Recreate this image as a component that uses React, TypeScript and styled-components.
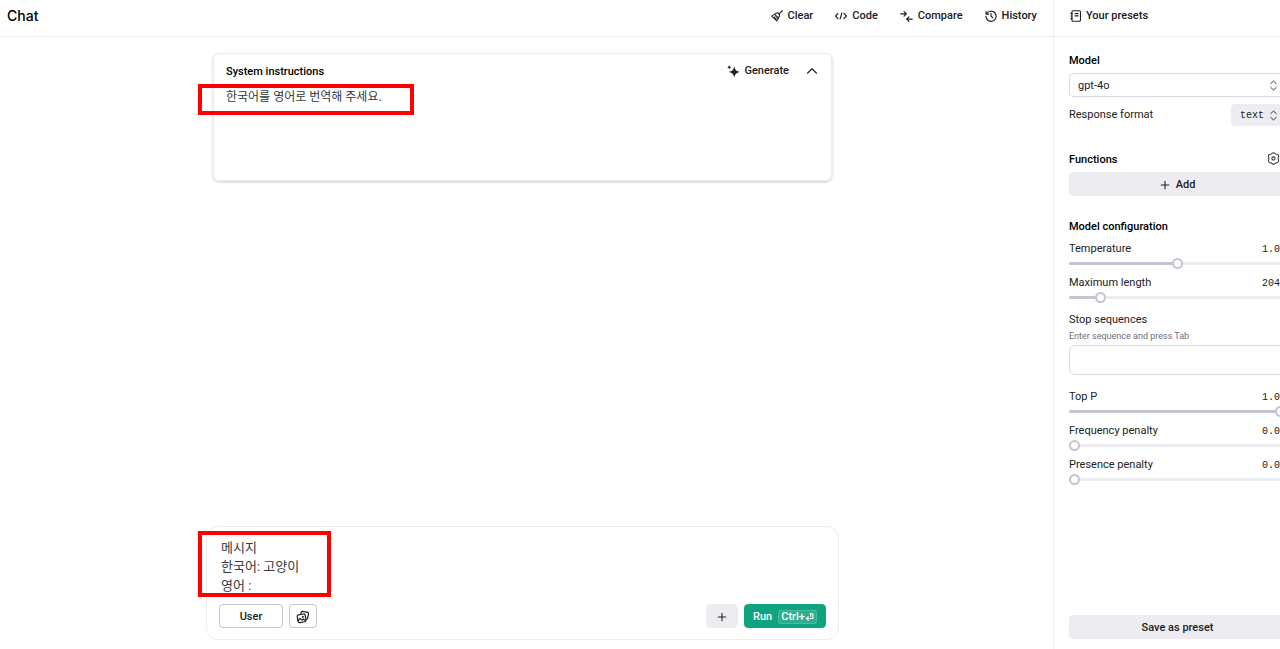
import React, { useState } from "react";
import styled, { createGlobalStyle } from "styled-components";

const GlobalStyle = createGlobalStyle`
  *, *::before, *::after { box-sizing: border-box; }
  body {
    margin: 0;
    overflow: hidden;
    background: #fff;
    color: #202123;
    font-family: Roboto, "Noto Sans CJK KR", sans-serif;
    font-size: 11px;
    line-height: 16px;
  }
  button, input, select, textarea { font: inherit; color: inherit; margin: 0; }
  h1, h2 { margin: 0; font-size: inherit; }
`;

const SIDEBAR_OVERHANG = 22;

const Shell = styled.div`
  display: grid;
  grid-template-columns: minmax(0, 1fr) 249px;
  grid-template-rows: 37px 1fr;
  width: calc(100vw + ${SIDEBAR_OVERHANG}px);
  min-height: 100vh;
`;

const TopBar = styled.header`
  display: flex;
  align-items: center;
  justify-content: space-between;
  padding: 0 16px 4px 7px;
  border-bottom: 1px solid #ececf1;
`;

const PageTitle = styled.h1`
  font-family: Inter, sans-serif;
  font-size: 14px;
  font-weight: 500;
  line-height: 20px;
  color: #000;
`;

const TextButton = styled.button`
  display: inline-flex;
  align-items: center;
  gap: 4px;
  padding: 0;
  border: 0;
  background: none;
  font-weight: 500;
  cursor: pointer;
`;

const Actions = styled.nav`
  display: flex;
  gap: 22px;

  ${TextButton} {
    gap: 5px;
  }
`;

const PresetBar = styled.div`
  display: flex;
  align-items: center;
  padding: 0 16px 4px;
  border-left: 1px solid #ececf1;
  border-bottom: 1px solid #ececf1;
`;

const Workspace = styled.main`
  display: flex;
  flex-direction: column;
  align-items: center;
  justify-content: space-between;
  padding: 16px 8px 9px 0;
`;

const SystemCard = styled.section`
  position: relative;
  width: 100%;
  max-width: 619px;
  padding: 9px 12px 10px;
  border: 1px solid #ececf1;
  border-radius: 6px;
  box-shadow: 0 1px 3px rgba(0, 0, 0, 0.22);
`;

const CardHeader = styled.div`
  display: flex;
  align-items: center;
  height: 16px;
`;

const CardTitle = styled.label`
  flex: 1;
  padding-top: 2px;
  font-weight: 500;
  color: #000;
`;

const CollapseButton = styled(TextButton)`
  margin: 0 1px 0 17px;
`;

const SystemText = styled.textarea`
  display: block;
  width: 100%;
  height: 82px;
  margin-top: 9px;
  padding: 0;
  border: 0;
  outline: 0;
  resize: none;
  background: none;
  font-size: 12px;
  line-height: 18px;
  color: #353740;
`;

const Highlight = styled.div<{ $top: number; $left: number; $width: number; $height: number }>`
  position: absolute;
  top: ${(p) => p.$top}px;
  left: ${(p) => p.$left}px;
  width: ${(p) => p.$width}px;
  height: ${(p) => p.$height}px;
  border: 4px solid #fe0000;
  pointer-events: none;
`;

const Composer = styled.form`
  position: relative;
  width: 100%;
  max-width: 633px;
  padding: 11px 12px;
  border: 1px solid #ececf1;
  border-radius: 12px;
`;

const MessageText = styled.textarea`
  display: block;
  width: 100%;
  height: 57px;
  margin-bottom: 9px;
  padding: 0 2px;
  border: 0;
  outline: 0;
  resize: none;
  overflow: hidden;
  background: none;
  font-size: 13px;
  line-height: 19px;
  color: #353740;
`;

const ComposerBar = styled.div`
  display: flex;
  gap: 6px;
`;

const Spacer = styled.span`
  flex: 1;
`;

const Button = styled.button<{ $tone: "outline" | "soft" | "primary"; $width?: string }>`
  display: flex;
  align-items: center;
  justify-content: center;
  gap: 6px;
  width: ${(p) => p.$width ?? "auto"};
  height: 24px;
  padding: 1px 0 0;
  border: 1px solid ${(p) => ({ outline: "#c5c5d2", soft: "#ececf1", primary: "#10a37f" })[p.$tone]};
  border-radius: 4px;
  background: ${(p) => ({ outline: "#fff", soft: "#ececf1", primary: "#10a37f" })[p.$tone]};
  color: ${(p) => (p.$tone === "primary" ? "#fff" : "#202123")};
  font-weight: 500;
  cursor: pointer;
`;

const Shortcut = styled.kbd`
  display: inline-flex;
  align-items: center;
  height: 14px;
  padding: 0 2px;
  border: 1px solid rgba(255, 255, 255, 0.15);
  border-radius: 3px;
  background: rgba(255, 255, 255, 0.12);
  font-family: inherit;
  font-size: 11px;
`;

const Sidebar = styled.aside`
  display: flex;
  flex-direction: column;
  padding: 16px 16px 10px 15px;
  border-left: 1px solid #ececf1;
`;

const Group = styled.section`
  margin-bottom: 23px;
`;

const ModelGroup = styled(Group)`
  margin-bottom: 26px;
`;

const GroupHeader = styled.div`
  display: flex;
  align-items: flex-start;
  justify-content: space-between;
  height: 16px;
  margin-bottom: 4px;
`;

const GroupTitle = styled.h2`
  font-weight: 500;
  color: #000;
`;

const IconButton = styled(TextButton)`
  margin-right: 6px;
  color: #353740;
`;

const SelectBox = styled.div<{ $soft?: boolean }>`
  position: relative;
  display: flex;
  align-items: center;

  select {
    appearance: none;
    width: ${(p) => (p.$soft ? "55px" : "100%")};
    height: ${(p) => (p.$soft ? 22 : 24)}px;
    padding: 2px 20px 0 8px;
    border: 1px solid ${(p) => (p.$soft ? "#ececf1" : "#d9d9e3")};
    border-radius: 4px;
    background: ${(p) => (p.$soft ? "#ececf1" : "#fff")};
    font-family: ${(p) => (p.$soft ? '"Liberation Mono", monospace' : "inherit")};
    font-size: ${(p) => (p.$soft ? 10 : 11)}px;
  }

  svg {
    position: absolute;
    right: 7px;
    pointer-events: none;
  }
`;

const FieldRow = styled.div`
  display: flex;
  align-items: center;
  justify-content: space-between;
  margin-top: 7px;
`;

const Param = styled.div`
  margin-top: 6px;
`;

const ParamHeader = styled.div`
  display: flex;
  align-items: baseline;
  justify-content: space-between;
  height: 16px;
`;

const ParamValue = styled.output`
  font-family: "Liberation Mono", monospace;
  font-size: 10px;
`;

const Range = styled.input`
  --fill: 0%;
  appearance: none;
  display: block;
  width: 100%;
  height: 12px;
  background: none;

  &::-webkit-slider-runnable-track {
    height: 3px;
    border-radius: 2px;
    background: linear-gradient(to right, #c5c5d2 var(--fill), #ececf1 var(--fill));
  }

  &::-webkit-slider-thumb {
    appearance: none;
    width: 11px;
    height: 11px;
    margin-top: -4px;
    border: 2px solid #c5c5d2;
    border-radius: 50%;
    background: #fff;
  }
`;

const StopField = styled.div`
  margin: 9px 0 14px;
`;

const FieldLabel = styled.label`
  display: block;
`;

const Hint = styled.div`
  margin-bottom: 1px;
  font-size: 9px;
  color: #6e6e80;
`;

const StopInput = styled.input`
  display: block;
  width: 100%;
  height: 30px;
  padding: 0 8px;
  border: 1px solid #d9d9e3;
  border-radius: 6px;
`;

const SaveArea = styled.div`
  margin-top: auto;
`;

const Icon = ({ size = 12, width = 1.5, children }: { size?: number; width?: number; children: React.ReactNode }) => (
  <svg
    width={size}
    height={size}
    viewBox="0 0 16 16"
    fill="none"
    stroke="currentColor"
    strokeWidth={width}
    strokeLinecap="round"
    strokeLinejoin="round"
    aria-hidden="true"
  >
    {children}
  </svg>
);

const BroomIcon = () => (
  <Icon>
    <path d="M15 1l-4.5 4.5M7.2 4.2c1.2-.8 2.4-.4 3.3.5s1.500 2.200.6 3.500L7.700 14.500 1 8.200zM5.200 6.200l4.700 4.400M3.500 10.500l2-1.500M5.700 12.600l1.500-2" />
  </Icon>
);
const CodeIcon = () => (
  <Icon>
    <path d="M4 4.500L.8 8 4 11.500M12 4.500L15.200 8 12 11.500M9.200 4L6.800 12" />
  </Icon>
);
const CompareIcon = () => (
  <Icon size={13}>
    <path d="M1 4.800h6.500M5 2l2.800 2.800L5 7.600M15 11.200H8.500M11 8.400l-2.800 2.800L11 14" />
  </Icon>
);
const HistoryIcon = () => (
  <Icon>
    <path d="M1.500 2v3.500H5M1.900 5.300A6.800 6.800 0 1 1 1.200 8.500M8 4.500V8l2.300 2.200" />
  </Icon>
);
const PresetIcon = () => (
  <Icon>
    <rect x="2.500" y="1" width="11.500" height="14" rx="1.800" />
    <path d="M1.300 4.500h1.500M1.300 8h1.500M1.300 11.500h1.500M6.800 4.800h4M6.800 7.800h4" />
  </Icon>
);
const SparkleIcon = () => (
  <svg width="13" height="13" viewBox="0 0 16 16" fill="currentColor" aria-hidden="true">
    <path d="M9 1.500c1 4.600 2.200 5.800 7 7-4.800 1.200-6 2.400-7 7-1-4.600-2.200-5.800-7-7 4.800-1.200 6-2.400 7-7zM2.800 0c.5 1.800 1 2.300 2.800 2.800-1.800.5-2.300 1-2.800 2.800C2.300 3.800 1.800 3.300 0 2.800 1.800 2.300 2.300 1.800 2.800 0z" />
  </svg>
);
const ChevronUpIcon = () => (
  <Icon>
    <path d="M2 11l6-6 6 6" />
  </Icon>
);
const UpDownIcon = () => (
  <Icon size={11} width={1.300}>
    <path d="M4 5.200L8 1.500l4 3.700M4 10.800l4 3.700 4-3.700" />
  </Icon>
);
const PlusIcon = () => (
  <Icon size={10} width={1.700}>
    <path d="M8 2v12M2 8h12" />
  </Icon>
);
const SettingsIcon = () => (
  <Icon size={13} width={1.300}>
    <path d="M6.500 1.500Q8 .3 9.500 1.500l1 .9 2 .5q1.900.4 1.800 2.100l-.5 2 .0 2 .5 2q.1 1.700-1.800 2.100l-2 .5-1 .9q-1.500 1.200-3 0l-1-.9-2-.5Q1.600 12.700 1.700 11l.5-2V7l-.5-2Q1.600 3.300 3.500 2.900l2-.5z" />
    <circle cx="8" cy="8" r="2" />
  </Icon>
);
const ImagesIcon = () => (
  <Icon size={14} width={1.400}>
    <path d="M5.500 4.500l.6-2.200q.3-1 1.300-.8l6 1.300q1.200.3 1 1.400l-1.200 5.300q-.3 1-1.400.9" />
    <rect x="1.800" y="5" width="9.200" height="9" rx="1.800" transform="rotate(-10 6.400 9.500)" />
    <path d="M2.400 12.200l2.200-2.500 2.100 1.900 1.800-1.300 2.600 1.900" />
    <circle cx="7.800" cy="7.800" r=".5" />
  </Icon>
);
const ReturnIcon = () => (
  <Icon size={9} width={2}>
    <path d="M9 3h5v8.500H3M6 8.500l-3.500 3L6 14.500M10 3v4.500" />
  </Icon>
);

type SliderProps = { id: string; label: string; initial: number; max: number; step: number; digits: number };

function Slider({ id, label, initial, max, step, digits }: SliderProps) {
  const [value, setValue] = useState(initial);
  const fill = { "--fill": `${(value / max) * 100}%` } as React.CSSProperties;
  return (
    <Param>
      <ParamHeader>
        <FieldLabel htmlFor={id}>{label}</FieldLabel>
        <ParamValue htmlFor={id}>{value.toFixed(digits)}</ParamValue>
      </ParamHeader>
      <Range
        id={id}
        type="range"
        min={0}
        max={max}
        step={step}
        value={value}
        style={fill}
        onChange={(e) => setValue(Number(e.target.value))}
      />
    </Param>
  );
}

export default function App() {
  return (
    <>
      <GlobalStyle />
      <Shell>
        <TopBar>
          <PageTitle>Chat</PageTitle>
          <Actions>
            <TextButton type="button"><BroomIcon />Clear</TextButton>
            <TextButton type="button"><CodeIcon />Code</TextButton>
            <TextButton type="button"><CompareIcon />Compare</TextButton>
            <TextButton type="button"><HistoryIcon />History</TextButton>
          </Actions>
        </TopBar>
        <PresetBar>
          <TextButton type="button"><PresetIcon />Your presets</TextButton>
        </PresetBar>

        <Workspace>
          <SystemCard>
            <CardHeader>
              <CardTitle htmlFor="system">System instructions</CardTitle>
              <TextButton type="button"><SparkleIcon />Generate</TextButton>
              <CollapseButton type="button" aria-label="Collapse"><ChevronUpIcon /></CollapseButton>
            </CardHeader>
            <SystemText id="system" defaultValue="한국어를 영어로 번역해 주세요." />
            <Highlight $top={30} $left={-16} $width={216} $height={31} />
          </SystemCard>

          <Composer onSubmit={(e) => e.preventDefault()}>
            <MessageText aria-label="Message" defaultValue={"메시지\n한국어: 고양이\n영어 :"} />
            <ComposerBar>
              <Button type="button" $tone="outline" $width="64px">User</Button>
              <Button type="button" $tone="outline" $width="28px" aria-label="Add image"><ImagesIcon /></Button>
              <Spacer />
              <Button type="button" $tone="soft" $width="32px" aria-label="Add message"><PlusIcon /></Button>
              <Button type="submit" $tone="primary" $width="82px">
                Run<Shortcut>Ctrl+<ReturnIcon /></Shortcut>
              </Button>
            </ComposerBar>
            <Highlight $top={4} $left={-9} $width={133} $height={66} />
          </Composer>
        </Workspace>

        <Sidebar>
          <ModelGroup>
            <GroupHeader><GroupTitle><label htmlFor="model">Model</label></GroupTitle></GroupHeader>
            <SelectBox>
              <select id="model"><option>gpt-4o</option></select>
              <UpDownIcon />
            </SelectBox>
            <FieldRow>
              <FieldLabel htmlFor="format">Response format</FieldLabel>
              <SelectBox $soft>
                <select id="format"><option>text</option></select>
                <UpDownIcon />
              </SelectBox>
            </FieldRow>
          </ModelGroup>

          <Group>
            <GroupHeader>
              <GroupTitle>Functions</GroupTitle>
              <IconButton type="button" aria-label="Function settings"><SettingsIcon /></IconButton>
            </GroupHeader>
            <Button type="button" $tone="soft" $width="100%"><PlusIcon />Add</Button>
          </Group>

          <Group>
            <GroupTitle>Model configuration</GroupTitle>
            <Slider id="temperature" label="Temperature" initial={1} max={2} step={0.01} digits={2} />
            <Slider id="length" label="Maximum length" initial={2048} max={16384} step={1} digits={0} />
            <StopField>
              <FieldLabel htmlFor="stop">Stop sequences</FieldLabel>
              <Hint id="stop-hint">Enter sequence and press Tab</Hint>
              <StopInput id="stop" type="text" aria-describedby="stop-hint" />
            </StopField>
            <Slider id="top-p" label="Top P" initial={1} max={1} step={0.01} digits={2} />
            <Slider id="frequency" label="Frequency penalty" initial={0} max={2} step={0.01} digits={2} />
            <Slider id="presence" label="Presence penalty" initial={0} max={2} step={0.01} digits={2} />
          </Group>

          <SaveArea>
            <Button type="button" $tone="soft" $width="100%">Save as preset</Button>
          </SaveArea>
        </Sidebar>
      </Shell>
    </>
  );
}
